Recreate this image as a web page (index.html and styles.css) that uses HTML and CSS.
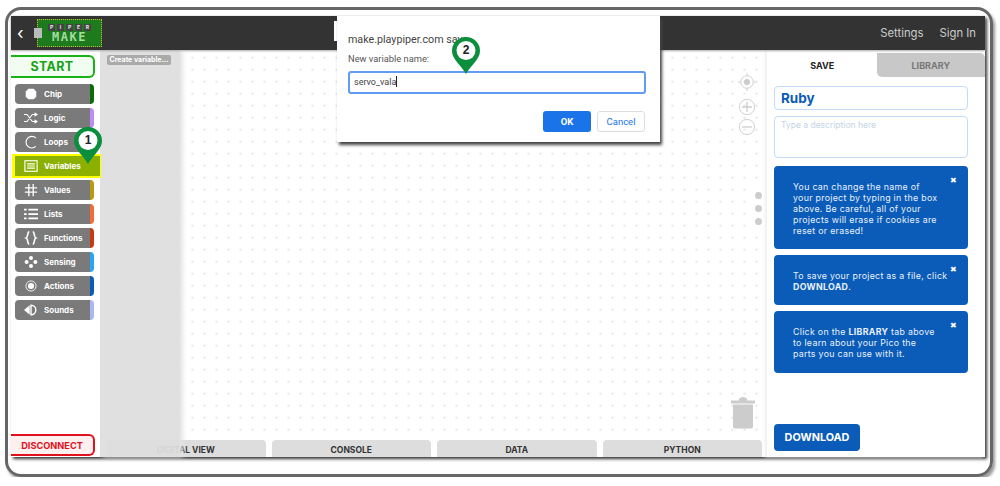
FILE: index.html
```html
<!DOCTYPE html>
<html lang="en">
  <head>
    <meta charset="UTF-8" />
    <title>Piper Make</title>
    <link rel="stylesheet" href="styles.css">
  </head>
  <body>
    <div class="frame">
      <div class="app">
        <!-- Top bar -->
        <header class="topbar">
          <span class="back">&#8249;</span>
          <div class="logo">
            <span class="logo-chip"></span>
            <div class="logo-board">
              <div class="logo-piper"><span>P</span><span>I</span><span>P</span><span>E</span><span>R</span></div>
              <div class="logo-make">MAKE</div>
            </div>
          </div>
          <div class="title-box"></div>
          <nav class="topbar-links">
            <a href="#">Settings</a>
            <a href="#">Sign In</a>
          </nav>
        </header>

        <div class="main">
          <!-- Block categories -->
          <aside class="sidebar">
            <button class="start-btn">START</button>
            <ul class="cats">
              <li class="cat cat-chip">
                <svg class="cat-icon" viewBox="0 0 16 16"><path d="M5 2h6l3 3v6l-3 3H5l-3-3V5z" fill="#fff"/></svg>Chip
              </li>
              <li class="cat cat-logic">
                <svg class="cat-icon" viewBox="0 0 16 16" fill="none" stroke="#fff" stroke-width="1.2"><path d="M0 4h3.500l6 8H13M0 12h3.500l6-8H13"/><path d="M12 1.500l4 2.500-4 2.500M12 9.500l4 2.500-4 2.500" fill="#fff" stroke="none"/></svg>Logic
              </li>
              <li class="cat cat-loops">
                <svg class="cat-icon" viewBox="0 0 16 16" fill="none" stroke="#fff" stroke-width="1.300"><path d="M13.500 3.400A6.600 6.600 0 1 0 13.500 13"/></svg>Loops
              </li>
              <li class="cat cat-variables">
                <svg class="cat-icon" viewBox="0 0 16 16" fill="none" stroke="#fff" stroke-width="1.300"><rect x="1" y="2" width="14" height="12"/><path d="M3.500 5.600h9M3.500 8h9M3.500 10.400h9"/></svg>Variables
              </li>
              <li class="cat cat-values">
                <svg class="cat-icon" viewBox="0 0 16 16" fill="none" stroke="#fff" stroke-width="1.500"><path d="M5.500 1v14M10.500 1v14M1 5.500h14M1 10.500h14"/></svg>Values
              </li>
              <li class="cat cat-lists">
                <svg class="cat-icon" viewBox="0 0 16 16" fill="#fff"><path d="M0 2h3v2H0zM5 2h11v2H5zM0 7h3v2H0zM5 7h11v2H5zM0 12h3v2H0zM5 12h11v2H5z"/></svg>Lists
              </li>
              <li class="cat cat-functions">
                <svg class="cat-icon" viewBox="0 0 16 16" fill="none" stroke="#fff" stroke-width="1.800"><path d="M6 1C3.500 1 5 7 2.500 8 5 9 3.500 15 6 15M10 1c2.500 0 1 6 3.500 7-2.500 1-1 7-3.500 7"/></svg>Functions
              </li>
              <li class="cat cat-sensing">
                <svg class="cat-icon" viewBox="0 0 16 16" fill="#fff"><circle cx="8" cy="3.500" r="2.300"/><circle cx="3" cy="8" r="2.300"/><circle cx="13" cy="8" r="2.300"/><circle cx="8" cy="12.500" r="2.300"/></svg>Sensing
              </li>
              <li class="cat cat-actions">
                <svg class="cat-icon" viewBox="0 0 16 16"><circle cx="8" cy="8" r="5.800" fill="none" stroke="#fff" stroke-width="1"/><circle cx="8" cy="8" r="3.500" fill="#fff"/></svg>Actions
              </li>
              <li class="cat cat-sounds">
                <svg class="cat-icon" viewBox="0 0 16 16"><path d="M0 8l6.500-5.500v11z" fill="#fff"/><path d="M8 2.500a5.500 5.500 0 0 1 0 11z" fill="none" stroke="#fff" stroke-width="1.600"/></svg>Sounds
              </li>
            </ul>
            <button class="disconnect-btn">DISCONNECT</button>
          </aside>

          <!-- Workspace -->
          <section class="workspace">
            <div class="canvas"></div>
            <div class="view-tabs">
              <div class="view-tab view-tab-first">DIGITAL VIEW</div>
              <div class="view-tab">CONSOLE</div>
              <div class="view-tab">DATA</div>
              <div class="view-tab">PYTHON</div>
            </div>

            <div class="flyout">
              <div class="flyout-btn">Create variable...</div>
            </div>

            <div class="zoom-controls">
              <svg class="zoom-icon" viewBox="0 0 20 20" fill="none" stroke="#ccc" stroke-width="1"><circle cx="10" cy="10" r="7"/><circle cx="10" cy="10" r="3" fill="#ccc"/><path d="M10 0v3M10 17v3M0 10h3M17 10h3"/></svg>
              <svg class="zoom-icon zoom-plus" viewBox="0 0 20 20" fill="none" stroke="#ccc" stroke-width="1"><circle cx="10" cy="10" r="8.500"/><path d="M10 4.500v11M4.500 10h11" stroke-width="1.400"/></svg>
              <svg class="zoom-icon zoom-minus" viewBox="0 0 20 20" fill="none" stroke="#ccc" stroke-width="1"><circle cx="10" cy="10" r="8.500"/><path d="M4.500 10h11" stroke-width="1.400"/></svg>
            </div>

            <svg class="trash" viewBox="0 0 24 32" fill="#ccc"><path d="M0 4h24v3H0zM8 2q4-3 8 0v2H8z"/><path d="M2 8h20v22q0 2-2 2H4q-2 0-2-2z"/></svg>

            <div class="handle"><span></span><span></span><span></span></div>
          </section>

          <!-- Right panel -->
          <aside class="panel">
            <div class="panel-tabs">
              <div class="panel-tab panel-tab-on">SAVE</div>
              <div class="panel-tab">LIBRARY</div>
            </div>
            <div class="panel-body">
              <div class="name-box">Ruby</div>
              <div class="desc-box">Type a description here</div>
              <div class="tip tip-1">
                <span class="tip-close">&#10006;</span>
                You can change the name of<br>your project by typing in the box<br>above. Be careful, all of your<br>projects will erase if cookies are<br>reset or erased!
              </div>
              <div class="tip tip-2">
                <span class="tip-close">&#10006;</span>
                To save your project as a file, click<br><b>DOWNLOAD</b>.
              </div>
              <div class="tip tip-3">
                <span class="tip-close">&#10006;</span>
                Click on the <b>LIBRARY</b> tab above<br>to learn about your Pico the<br>parts you can use with it.
              </div>
              <button class="download-btn">DOWNLOAD</button>
            </div>
          </aside>
        </div>
      </div>
    </div>

    <!-- Browser prompt -->
    <div class="dialog">
      <div class="dialog-title">make.playpiper.com says</div>
      <div class="dialog-label">New variable name:</div>
      <div class="dialog-input">servo_vala<span class="caret"></span></div>
      <div class="dialog-actions">
        <button class="dialog-ok">OK</button>
        <button class="dialog-cancel">Cancel</button>
      </div>
    </div>

    <!-- Step markers -->
    <div class="pin pin-1">
      <svg viewBox="0 0 28 37"><path d="M14 0a14 14 0 0 1 14 14c0 8-9 14-14 23C9 28 0 22 0 14A14 14 0 0 1 14 0z" fill="#0b8f3c"/><circle cx="14" cy="13.500" r="9.500" fill="#fff"/></svg>
      <span class="pin-num">1</span>
    </div>
    <div class="pin pin-2">
      <svg viewBox="0 0 28 37"><path d="M14 0a14 14 0 0 1 14 14c0 8-9 14-14 23C9 28 0 22 0 14A14 14 0 0 1 14 0z" fill="#0b8f3c"/><circle cx="14" cy="13.500" r="9.500" fill="#fff"/></svg>
      <span class="pin-num">2</span>
    </div>
  </body>
</html>
```

FILE: styles.css
```css
* {
  box-sizing: border-box;
}
body {
  margin: 0;
  background: #fff;
  font-family: Inter, "Liberation Sans", sans-serif;
  overflow: hidden;
}
button {
  font-family: inherit;
  cursor: pointer;
}

/* Outer rounded frame */
.frame {
  width: 988px;
  height: 470px;
  margin: 7px 0 0 5px;
  padding: 6px 3px 0 3px;
  border: 3px solid #666;
  border-radius: 16px;
  box-shadow: 2px 3px 3px #999;
}
.app {
  height: 441px;
  width: 974px;
  display: flex;
  flex-direction: column;
  box-shadow: 2px 2px 3px #333;
}

/* Top bar */
.topbar {
  height: 34px;
  background: #333;
  display: flex;
  align-items: center;
  position: relative;
  flex-shrink: 0;
  box-shadow: 0 1px 2px #aaa;
  z-index: 3;
}
.back {
  color: #fff;
  font-size: 17px;
  margin-left: 6px;
  width: 17px;
  line-height: 30px;
}
.logo {
  display: flex;
  align-items: center;
}
.logo-chip {
  position: relative;
  z-index: 1;
  width: 8px;
  height: 10px;
  margin-right: -5px;
  background: #bbb;
}
.logo-board {
  width: 65px;
  height: 28px;
  background: #1d7a1d;
  border: 1px dotted #c6b83a;
  text-align: center;
  color: #a4dca0;
}
.logo-piper {
  display: flex;
  justify-content: center;
  gap: 2px;
  font-size: 5px;
  font-weight: 700;
  margin-top: 4px;
  height: 7px;
  line-height: 7px;
}
.logo-piper span {
  background: #444;
  color: #eee;
  width: 7px;
}
.logo-make {
  font-family: "DejaVu Sans Mono", monospace;
  font-size: 12px;
  line-height: 13px;
  letter-spacing: 1.500px;
  font-weight: 700;
}
.title-box {
  position: absolute;
  left: 323px;
  top: 5px;
  width: 326px;
  height: 20px;
  background: #fff;
}
.topbar-links {
  margin-left: auto;
  display: flex;
  gap: 16px;
  padding-right: 9px;
}
.topbar-links a {
  color: #ccc;
  text-decoration: none;
  font-size: 11.300px;
}

.main {
  flex: 1;
  display: flex;
  min-height: 0;
}

/* Left sidebar */
.sidebar {
  width: 89px;
  flex-shrink: 0;
  display: flex;
  flex-direction: column;
  background: #fff;
  padding-top: 5px;
  position: relative;
  z-index: 2;
}
.start-btn {
  width: 84px;
  height: 23px;
  background: #f1fdf1;
  border: 2px solid #17b317;
  border-left: none;
  border-radius: 0 6px 6px 0;
  color: #17a117;
  font-size: 12.500px;
  font-weight: 700;
  letter-spacing: 0.300px;
  padding: 0;
}
.cats {
  list-style: none;
  margin: 6px 0 0;
  padding: 0 0 0 4px;
}
.cat {
  width: 79px;
  height: 20px;
  margin-bottom: 4px;
  background: #7a7a7a;
  border-radius: 4px;
  border-right: 4px solid #888;
  color: #fff;
  font-size: 8px;
  font-weight: 700;
  display: flex;
  align-items: center;
}
.cat-icon {
  width: 14px;
  height: 14px;
  margin: 0 6px 0 9px;
  flex-shrink: 0;
}
.cat-chip { border-right-color: #0b6b0b; }
.cat-logic { border-right-color: #bd8cf5; }
.cat-loops { border-right-color: #2fb344; }
.cat-values { border-right-color: #b89b10; }
.cat-lists { border-right-color: #f26b38; }
.cat-functions { border-right-color: #c83a12; }
.cat-sensing { border-right-color: #2aa5f5; }
.cat-actions { border-right-color: #0a5cb8; }
.cat-sounds { border-right-color: #a9b8f0; }
.cat-variables {
  width: 85px;
  border-right: none;
  border-radius: 0;
  background: #8cb000;
  box-shadow: -1px 0 0 2px #ff0;
  position: relative;
}
.disconnect-btn {
  margin-top: auto;
  margin-bottom: 1px;
  width: 84px;
  height: 22px;
  background: #fff0f0;
  border: 2px solid #e0101c;
  border-left: none;
  border-radius: 0 6px 6px 0;
  color: #e0101c;
  font-size: 9.200px;
  font-weight: 700;
  padding: 0;
}

/* Workspace */
.workspace {
  flex: 1;
  position: relative;
  display: flex;
  flex-direction: column;
  min-width: 0;
  background: #fff;
}
.canvas {
  flex: 1;
  background-image: radial-gradient(circle, #dedede 0.600px, transparent 1px);
  background-size: 12px 12px;
  background-position: 2.500px 1.700px;
}
.view-tabs {
  display: flex;
  gap: 6px;
  height: 17px;
  padding-left: 6px;
  background: #fff;
}
.view-tab {
  width: 159.500px;
  background: #ddd;
  border-radius: 4px 4px 0 0;
  color: #333;
  font-size: 8.500px;
  font-weight: 700;
  text-align: center;
  line-height: 21px;
}
.flyout {
  position: absolute;
  left: 0;
  top: 0;
  bottom: 0;
  width: 80px;
  background: rgba(222, 222, 222, 0.94);
  box-shadow: 3px 0 5px #e4e4e4;
  border-radius: 0 4px 0 0;
  padding: 5px 0 0 7px;
}
.flyout-btn {
  width: 64px;
  height: 10px;
  background: #aaa;
  border-radius: 2px;
  color: #fff;
  font-size: 7px;
  font-weight: 700;
  line-height: 10px;
  text-align: center;
  white-space: nowrap;
}
.zoom-controls {
  position: absolute;
  left: 638px;
  top: 23px;
  width: 18px;
  display: flex;
  flex-direction: column;
  align-items: center;
}
.zoom-icon {
  width: 18px;
  height: 18px;
}
.zoom-plus {
  margin-top: 7px;
}
.zoom-minus {
  margin-top: 2px;
}
.trash {
  position: absolute;
  left: 631px;
  top: 346px;
  width: 24px;
  height: 33px;
}
.handle {
  position: absolute;
  right: 0;
  top: 135px;
  width: 18px;
  height: 46px;
  background: #fff;
  border-radius: 5px 0 0 5px;
  display: flex;
  flex-direction: column;
  align-items: center;
  justify-content: center;
  gap: 6px;
}
.handle span {
  width: 7px;
  height: 7px;
  border-radius: 50%;
  background: #ccc;
}

/* Right panel */
.panel {
  width: 218px;
  flex-shrink: 0;
  display: flex;
  flex-direction: column;
  position: relative;
  z-index: 2;
  padding-top: 3px;
  background: #fff;
  box-shadow: -2px 0 3px #eee;
}
.panel-tabs {
  display: flex;
  height: 24px;
  padding-left: 1px;
}
.panel-tab {
  flex: 1;
  background: #c8c8c8;
  color: #777;
  font-size: 9px;
  font-weight: 700;
  text-align: center;
  line-height: 26px;
  border-radius: 0 5px 0 5px;
}
.panel-tab-on {
  background: #fff;
  color: #222;
  border-radius: 5px 5px 0 0;
}
.panel-body {
  flex: 1;
  display: flex;
  flex-direction: column;
  padding: 9px 17px 6px 7px;
}
.name-box {
  height: 24px;
  border: 1px solid #c3dcf5;
  border-radius: 4px;
  color: #0a5cb8;
  font-size: 13.500px;
  font-weight: 700;
  line-height: 22px;
  padding-left: 6px;
}
.desc-box {
  height: 42px;
  margin-top: 6px;
  border: 1px solid #c3dcf5;
  border-radius: 4px;
  color: #c5d4e6;
  font-size: 8.500px;
  padding: 3px 6px;
}
.tip {
  position: relative;
  margin-top: 6px;
  background: #0a5cb8;
  border-radius: 4px;
  color: #e8f0fa;
  font-size: 8.800px;
  letter-spacing: 0.300px;
  line-height: 11px;
  padding: 15px 10px 0 19px;
  white-space: nowrap;
}
.tip-1 {
  margin-top: 8px;
  height: 83px;
}
.tip-2 {
  height: 50px;
}
.tip-3 {
  height: 62px;
}
.tip-close {
  position: absolute;
  right: 11px;
  top: 10px;
  font-size: 8px;
  line-height: 9px;
  color: #fff;
}
.download-btn {
  margin-top: auto;
  width: 86px;
  height: 27px;
  background: #0a5cb8;
  border: none;
  border-radius: 4px;
  color: #fff;
  font-size: 10.800px;
  font-weight: 700;
  padding: 0;
}

/* Browser prompt */
.dialog {
  position: absolute;
  left: 337px;
  top: 16px;
  width: 323px;
  height: 126px;
  background: #fff;
  box-shadow: 2px 3px 3px #444;
  padding: 17px 14px 0 11px;
  font-family: Roboto, "Liberation Sans", sans-serif;
  z-index: 5;
}
.dialog-title {
  font-size: 10.700px;
  line-height: 14px;
  color: #444;
}
.dialog-label {
  margin-top: 6px;
  font-size: 9.300px;
  line-height: 12px;
  color: #555;
}
.dialog-input {
  margin-top: 6px;
  height: 23px;
  border: 2px solid #5f9cf2;
  border-radius: 3px;
  color: #444;
  font-size: 9px;
  line-height: 19px;
  padding-left: 4px;
}
.caret {
  display: inline-block;
  width: 1px;
  height: 11px;
  background: #222;
  vertical-align: -2px;
}
.dialog-actions {
  display: flex;
  justify-content: flex-end;
  gap: 6px;
  margin-top: 17px;
  padding-right: 1px;
}
.dialog-ok, .dialog-cancel {
  width: 48px;
  height: 21px;
  border-radius: 3px;
  font-size: 9.500px;
  font-weight: 700;
  padding: 0;
}
.dialog-ok {
  background: #1a73e8;
  border: none;
  color: #fff;
}
.dialog-cancel {
  background: #fff;
  border: 1px solid #ddd;
  color: #1a73e8;
  font-weight: 400;
}

/* Step markers */
.pin {
  position: absolute;
  width: 28px;
  height: 37px;
  z-index: 6;
}
.pin svg {
  display: block;
  width: 28px;
  height: 37px;
}
.pin-1 {
  left: 74px;
  top: 127px;
}
.pin-2 {
  left: 452px;
  top: 37px;
}
.pin-num {
  position: absolute;
  left: 0;
  top: 6px;
  width: 28px;
  text-align: center;
  font-family: "Liberation Sans", sans-serif;
  font-size: 12px;
  font-weight: 700;
  line-height: 15px;
  color: #222;
}
```
